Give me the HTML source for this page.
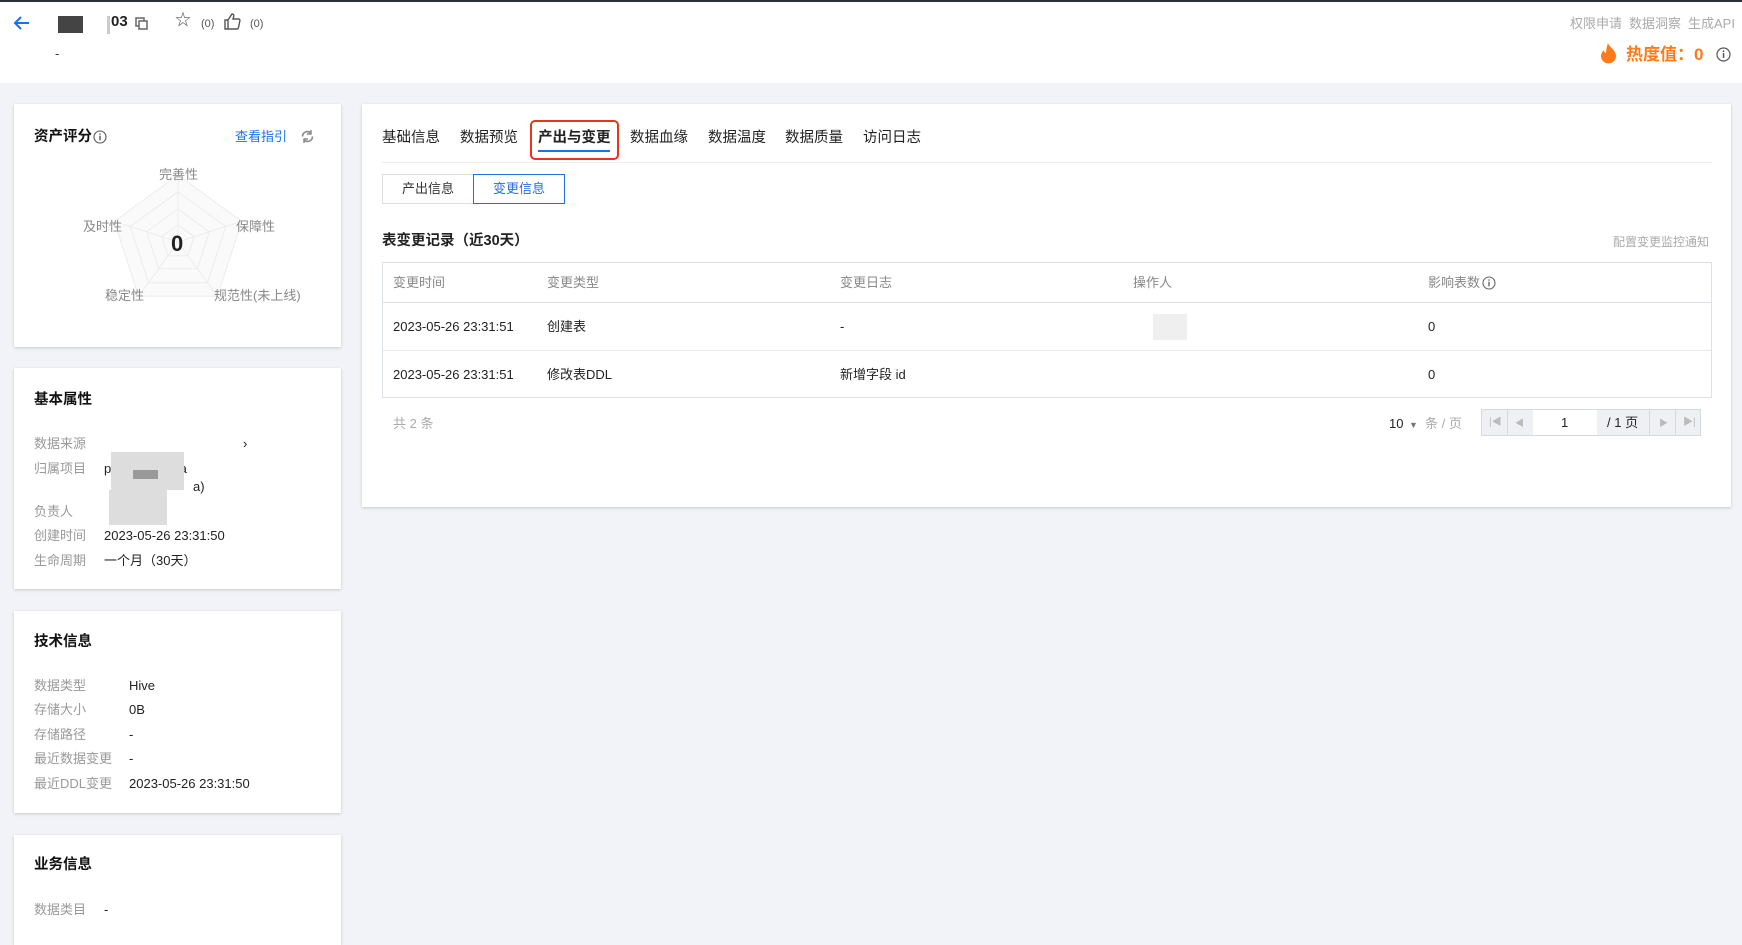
<!DOCTYPE html>
<html><head><meta charset="utf-8"><style>
*{margin:0;padding:0;box-sizing:border-box}
body{width:1742px;height:930px;overflow:hidden;background:#f2f3f8;font-family:"Liberation Sans","Noto Sans CJK SC",sans-serif;font-size:13px;color:#222;position:relative}
.a{position:absolute;white-space:nowrap;line-height:16px}
.card{position:absolute;background:#fff;box-shadow:0 1px 3px rgba(0,0,0,.18)}
.lbl{color:#999}
.g{color:#888}
.t{font-weight:bold;font-size:14.5px;color:#111}
</style></head><body>
<div class="a" style="left:0;top:0;width:1742px;height:2px;background:#2b2f3a"></div>
<div class="a" style="left:0;top:2px;width:1742px;height:81px;background:#fff"></div>
<svg class="a" style="left:13px;top:15px" width="18" height="16" viewBox="0 0 18 16"><path d="M16 8H3M8 2L2 8l6 6" fill="none" stroke="#1f6fe5" stroke-width="2"/></svg>
<div class="a" style="left:58px;top:16px;width:25px;height:17px;background:#444"></div>
<div class="a" style="left:107px;top:16px;width:3px;height:18px;background:#ccc"></div>
<div class="a" style="left:111px;top:14px;font-size:15px;font-weight:bold">03</div>
<svg class="a" style="left:135px;top:17px" width="13" height="13"><rect x="1" y="1" width="8" height="8" fill="none" stroke="#666" stroke-width="1.5"/><rect x="4" y="4" width="8" height="8" fill="#fff" stroke="#666" stroke-width="1.5"/></svg>
<div class="a" style="left:175px;top:13px;font-size:16px;color:#555">☆</div>
<div class="a" style="left:201px;top:16px;font-size:11px;color:#555">(0)</div>
<svg class="a" style="left:224px;top:13px" width="17" height="17" viewBox="0 0 17 17"><path d="M1 7h3v9H1zM4 7l4-6c1.5 0 2 1 1.7 2.5L9 6h5.5c1 0 1.6.8 1.4 1.8l-1.5 7c-.2.7-.8 1.2-1.5 1.2H4" fill="none" stroke="#555" stroke-width="1.4"/></svg>
<div class="a" style="left:250px;top:16px;font-size:11px;color:#555">(0)</div>
<div class="a" style="left:55px;top:46px;color:#333">-</div>
<div class="a g" style="left:1570px;top:16px;color:#aaa">权限申请</div>
<div class="a g" style="left:1629px;top:16px;color:#aaa">数据洞察</div>
<div class="a g" style="left:1688px;top:16px;color:#aaa">生成API</div>
<svg class="a" style="left:1600px;top:43px" width="17" height="21" viewBox="0 0 17 21"><path d="M8 0c1 4 8 7 8 13a7.5 7.5 0 0 1-15 0c0-3 2-5 3-6 0 2 1 3 2 3C6 7 7 3 8 0z" fill="#ff7a1a"/></svg>
<div class="a" style="left:1626px;top:45px;font-size:17px;line-height:20px;font-weight:bold;color:#ff7a1a">热度值：0</div>
<svg class="a" style="left:1716px;top:47px" width="15" height="15"><circle cx="7.5" cy="7.5" r="6.5" fill="none" stroke="#555" stroke-width="1.2"/><rect x="6.8" y="6" width="1.5" height="5" fill="#555"/><circle cx="7.5" cy="4.2" r=".9" fill="#555"/></svg>

<div class="card" style="left:14px;top:104px;width:327px;height:243px"></div>
<div class="a t" style="left:34px;top:129px">资产评分</div>
<svg class="a" style="left:93px;top:130px" width="14" height="14"><circle cx="7" cy="7" r="6" fill="none" stroke="#555" stroke-width="1.1"/><rect x="6.3" y="5.7" width="1.4" height="4.6" fill="#555"/><circle cx="7" cy="4" r=".8" fill="#555"/></svg>
<div class="a" style="left:235px;top:129px;color:#1f6fe5">查看指引</div>
<svg class="a" style="left:300px;top:129px" width="15" height="15" viewBox="0 0 15 15"><path d="M12.5 7.5A5 5 0 0 1 4 11M2.5 7.5A5 5 0 0 1 11 4" fill="none" stroke="#888" stroke-width="1.6"/><path d="M11 1v4H7M4 14v-4h4" fill="none" stroke="#888" stroke-width="1.4"/></svg>
<svg class="a" style="left:108px;top:172px" width="140" height="130" viewBox="-70 -70 140 130">
<g fill="none" stroke="#ececec">
<polygon points="0,-67 63.7,-20.7 39.4,54.2 -39.4,54.2 -63.7,-20.7" fill="#fafafa"/>
<polygon points="0,-50 47.8,-15.5 29.5,40.7 -29.5,40.7 -47.8,-15.5"/>
<polygon points="0,-33 31.4,-10.2 19.4,26.7 -19.4,26.7 -31.4,-10.2"/>
<polygon points="0,-17 16.2,-5.3 10,13.8 -10,13.8 -16.2,-5.3"/>
<path d="M0 0V-67M0 0L63.7-20.7M0 0L39.4 54.2M0 0L-39.4 54.2M0 0L-63.7-20.7"/>
</g></svg>
<div class="a" style="left:171px;top:232px;font-size:22px;line-height:24px;font-weight:bold">0</div>
<div class="a g" style="left:159px;top:167px">完善性</div>
<div class="a g" style="left:83px;top:219px">及时性</div>
<div class="a g" style="left:236px;top:219px">保障性</div>
<div class="a g" style="left:105px;top:288px">稳定性</div>
<div class="a g" style="left:214px;top:288px">规范性(未上线)</div>

<div class="card" style="left:14px;top:368px;width:327px;height:221px"></div>
<div class="a t" style="left:34px;top:392px">基本属性</div>
<div class="a lbl" style="left:34px;top:436px">数据来源</div><div class="a" style="left:243px;top:436px">›</div>
<div class="a lbl" style="left:34px;top:461px">归属项目</div><div class="a" style="left:104px;top:461px">pr</div><div class="a" style="left:176px;top:461px">ta</div><div class="a" style="left:193px;top:479px">a)</div>
<div class="a" style="left:111px;top:452px;width:73px;height:38px;background:#ddd"></div>
<div class="a" style="left:133px;top:470px;width:25px;height:9px;background:#999"></div>
<div class="a lbl" style="left:34px;top:504px">负责人</div>
<div class="a" style="left:109px;top:490px;width:58px;height:35px;background:#ddd"></div>
<div class="a lbl" style="left:34px;top:528px">创建时间</div><div class="a" style="left:104px;top:528px">2023-05-26 23:31:50</div>
<div class="a lbl" style="left:34px;top:553px">生命周期</div><div class="a" style="left:104px;top:553px">一个月（30天）</div>

<div class="card" style="left:14px;top:611px;width:327px;height:202px"></div>
<div class="a t" style="left:34px;top:634px">技术信息</div>
<div class="a lbl" style="left:34px;top:678px">数据类型</div><div class="a" style="left:129px;top:678px">Hive</div>
<div class="a lbl" style="left:34px;top:702px">存储大小</div><div class="a" style="left:129px;top:702px">0B</div>
<div class="a lbl" style="left:34px;top:727px">存储路径</div><div class="a" style="left:129px;top:727px">-</div>
<div class="a lbl" style="left:34px;top:751px">最近数据变更</div><div class="a" style="left:129px;top:751px">-</div>
<div class="a lbl" style="left:34px;top:776px">最近DDL变更</div><div class="a" style="left:129px;top:776px">2023-05-26 23:31:50</div>

<div class="card" style="left:14px;top:835px;width:327px;height:110px"></div>
<div class="a t" style="left:34px;top:857px">业务信息</div>
<div class="a lbl" style="left:34px;top:902px">数据类目</div><div class="a" style="left:104px;top:902px">-</div>

<div class="card" style="left:362px;top:104px;width:1369px;height:403px"></div>
<div class="a" style="left:382px;top:162px;width:1330px;height:1px;background:#eeeeee"></div>
<div class="a" style="left:382px;top:130px;font-size:14.5px">基础信息</div>
<div class="a" style="left:460px;top:130px;font-size:14.5px">数据预览</div>
<div class="a" style="left:538px;top:130px;font-size:14.5px;font-weight:bold">产出与变更</div>
<div class="a" style="left:538px;top:150px;width:72px;height:2px;background:#1f6fe5"></div>
<div class="a" style="left:530px;top:120px;width:89px;height:40px;border:2.5px solid #e8331e;border-radius:5px"></div>
<div class="a" style="left:630px;top:130px;font-size:14.5px">数据血缘</div>
<div class="a" style="left:708px;top:130px;font-size:14.5px">数据温度</div>
<div class="a" style="left:785px;top:130px;font-size:14.5px">数据质量</div>
<div class="a" style="left:863px;top:130px;font-size:14.5px">访问日志</div>
<div class="a" style="left:382px;top:174px;width:92px;height:30px;border:1px solid #ddd;text-align:center;line-height:28px;color:#333">产出信息</div>
<div class="a" style="left:473px;top:174px;width:92px;height:30px;border:1px solid #1f6fe5;text-align:center;line-height:28px;color:#1f6fe5">变更信息</div>
<div class="a" style="left:382px;top:233px;font-size:14.5px;font-weight:bold">表变更记录（近30天）</div>
<div class="a" style="left:1613px;top:234px;font-size:12px;color:#aaa">配置变更监控通知</div>
<div class="a" style="left:382px;top:262px;width:1330px;height:136px;border:1px solid #dde1e8"></div>
<div class="a" style="left:383px;top:302px;width:1328px;height:1px;background:#dde1e8"></div>
<div class="a" style="left:383px;top:350px;width:1328px;height:1px;background:#e8e8e8"></div>
<div class="a g" style="left:393px;top:275px">变更时间</div>
<div class="a g" style="left:547px;top:275px">变更类型</div>
<div class="a g" style="left:840px;top:275px">变更日志</div>
<div class="a g" style="left:1133px;top:275px">操作人</div>
<div class="a g" style="left:1428px;top:275px">影响表数</div>
<svg class="a" style="left:1482px;top:276px" width="14" height="14"><circle cx="7" cy="7" r="6" fill="none" stroke="#666" stroke-width="1.1"/><rect x="6.3" y="5.7" width="1.4" height="4.6" fill="#666"/><circle cx="7" cy="4" r=".8" fill="#666"/></svg>
<div class="a" style="left:393px;top:319px">2023-05-26 23:31:51</div>
<div class="a" style="left:547px;top:319px">创建表</div>
<div class="a" style="left:840px;top:319px">-</div>
<div class="a" style="left:1153px;top:314px;width:34px;height:26px;background:#efefef"></div>
<div class="a" style="left:1428px;top:319px">0</div>
<div class="a" style="left:393px;top:367px">2023-05-26 23:31:51</div>
<div class="a" style="left:547px;top:367px">修改表DDL</div>
<div class="a" style="left:840px;top:367px">新增字段 id</div>
<div class="a" style="left:1428px;top:367px">0</div>
<div class="a" style="left:393px;top:416px;color:#aaa">共 2 条</div>
<div class="a" style="left:1389px;top:416px">10</div>
<div class="a" style="left:1409px;top:417px;color:#777;font-size:9px">▼</div>
<div class="a" style="left:1425px;top:416px;color:#aaa">条 / 页</div>
<div class="a" style="left:1481px;top:409px;width:220px;height:27px;border:1px solid #d5d9e0;background:#eef0f4"></div>
<div class="a" style="left:1507px;top:410px;width:1px;height:25px;background:#d5d9e0"></div>
<div class="a" style="left:1533px;top:410px;width:64px;height:25px;background:#fff"></div>
<div class="a" style="left:1649px;top:410px;width:1px;height:25px;background:#d5d9e0"></div>
<div class="a" style="left:1675px;top:410px;width:1px;height:25px;background:#d5d9e0"></div>
<div class="a" style="left:1489px;top:415px;color:#bbb;font-size:10px">|◀</div>
<div class="a" style="left:1515px;top:415px;color:#bbb;font-size:9px">◀</div>
<div class="a" style="left:1561px;top:415px">1</div>
<div class="a" style="left:1607px;top:415px">/ 1 页</div>
<div class="a" style="left:1659px;top:415px;color:#bbb;font-size:9px">▶</div>
<div class="a" style="left:1683px;top:415px;color:#bbb;font-size:10px">▶|</div>
</body></html>
